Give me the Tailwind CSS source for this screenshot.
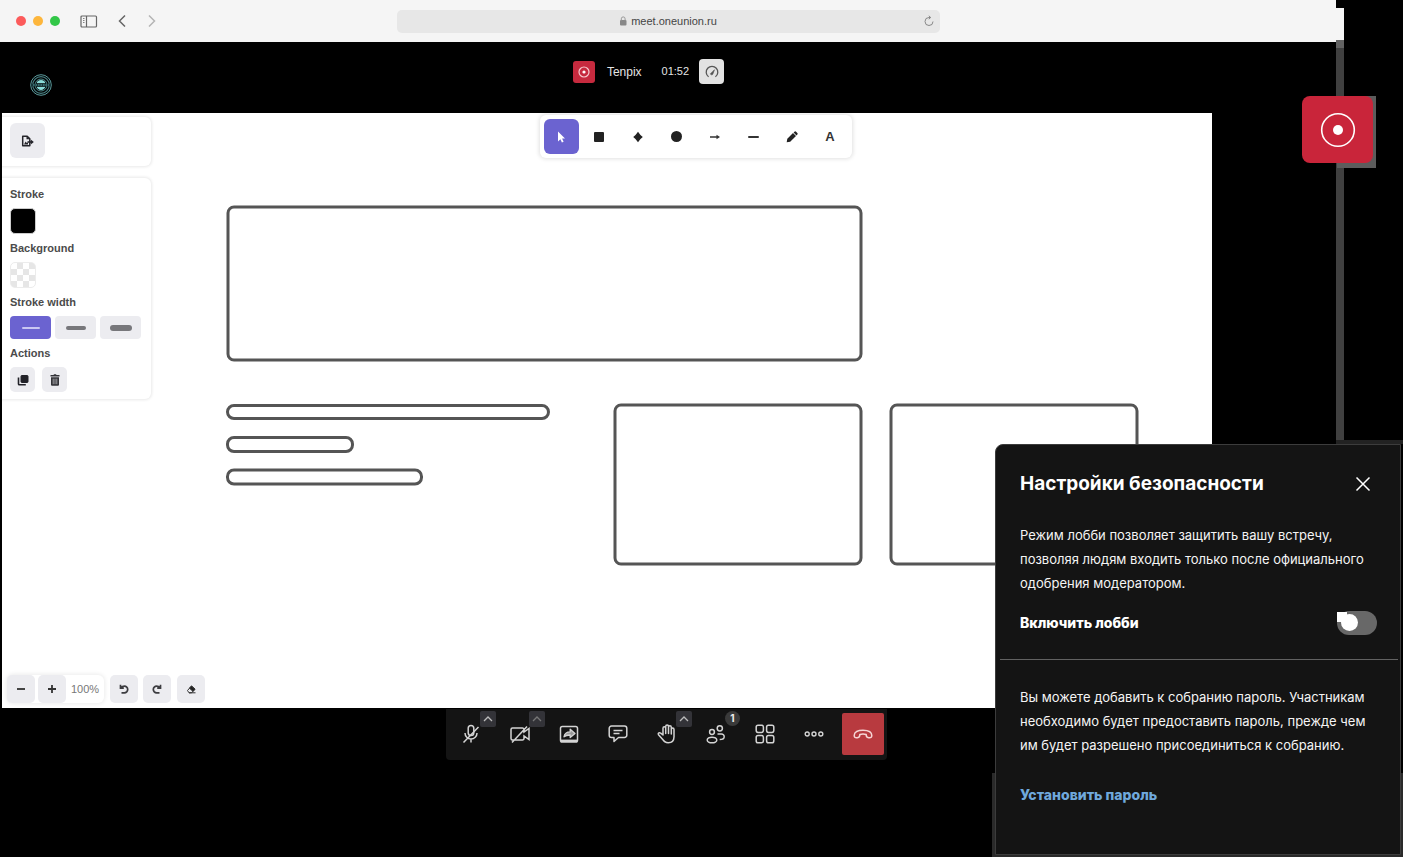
<!DOCTYPE html>
<html lang="ru">
<head>
<meta charset="utf-8">
<title>meet.oneunion.ru</title>
<meta name="viewport" content="width=device-width, initial-scale=1">
<script src="https://cdn.jsdelivr.net/npm/@tailwindcss/browser@4"></script>
</head>
<body class="relative flex min-h-screen overflow-x-hidden bg-black font-['Inter','Liberation_Sans',sans-serif]">

<!-- Browser window -->
<div class="flex min-h-screen flex-1 flex-col">
  <header class="grid h-[42px] grid-cols-[1fr_543px_1fr] items-center bg-[#f5f5f5]">
    <div class="flex items-center pl-4">
      <div class="flex gap-[7px]">
        <span class="size-[10px] rounded-full bg-[#fc5b5b]"></span>
        <span class="size-[10px] rounded-full bg-[#fdb63c]"></span>
        <span class="size-[10px] rounded-full bg-[#32c748]"></span>
      </div>
      <button aria-label="Sidebar" class="ml-5"><svg class="h-[13px] w-[18px]" viewBox="0 0 18 13" fill="none" stroke="#666" stroke-width="1.2"><rect x="1" y="1" width="15.500" height="11" rx="1"/><path d="M6.500 1v11"/><path d="M3 3.500h1.500M3 5.500h1.500M3 7.500h1.500" stroke-width=".8"/></svg></button>
      <button aria-label="Back" class="ml-5"><svg class="h-3 w-2" viewBox="0 0 8 12" fill="none" stroke="#666" stroke-width="1.500"><path d="M7 .5 1.500 6 7 11.500"/></svg></button>
      <button aria-label="Forward" class="ml-[22px]"><svg class="h-3 w-2" viewBox="0 0 8 12" fill="none" stroke="#b5b5b5" stroke-width="1.500"><path d="M1 .5 6.500 6 1 11.500"/></svg></button>
    </div>
    <div class="relative flex h-[23px] items-center justify-center gap-1 rounded-[5px] bg-[#e7e7e7] font-['Liberation_Sans',sans-serif] text-[11px] text-[#454545]">
      <svg class="h-[10px] w-2" viewBox="0 0 8 10"><rect x="1" y="4" width="6.500" height="5.500" rx="1" fill="#888"/><path d="M2.300 4.500V2.800a1.900 1.900 0 0 1 3.800 0v1.700" fill="none" stroke="#999"/></svg>
      <span>meet.oneunion.ru</span>
      <button aria-label="Reload" class="absolute right-[5px]"><svg class="size-3" viewBox="0 0 12 12" fill="none" stroke="#888" stroke-width="1"><path d="M10 6.500A4 4 0 1 1 6 2.500h1.500M5.800.8l1.900 1.700-1.900 1.700"/></svg></button>
    </div>
    <div></div>
  </header>

  <!-- Meeting header -->
  <div class="flex h-[71px] items-start pt-[17px]">
    <div class="flex-1 pt-[14px] pl-[29px]">
      <svg class="size-6" viewBox="0 0 24 24" fill="none" stroke="#5b9a9c"><circle cx="12" cy="12" r="10.300" stroke-width="1"/><circle cx="12" cy="12" r="8.300" stroke="#477f82" stroke-width="1.200"/><circle cx="12" cy="12" r="6" stroke-width="1" stroke="#4d8b8d"/><path d="M7.500 10.200a4.800 4.800 0 0 1 9 0zM7.500 13.800a4.800 4.800 0 0 0 9 0z" fill="#8adcd8" stroke="none"/><path d="M2 12h20" stroke="#173638" stroke-width="2.500"/><path d="M4 12h16" stroke="#5a9c9c" stroke-width="1" stroke-dasharray="1.500 1"/></svg>
    </div>
    <div class="mr-[42px] flex items-center font-['Liberation_Sans',sans-serif] text-[12px] text-[#e4e4e4]">
      <button aria-label="Запись" class="flex size-[22px] items-center justify-center rounded-[3px] bg-[#c62a3e]"><svg class="size-3" viewBox="0 0 12 12"><circle cx="6" cy="6" r="5" fill="none" stroke="#f7c9cf" stroke-width="1.200"/><circle cx="6" cy="6" r="1.600" fill="#fff"/></svg></button>
      <span class="ml-3">Tenpix</span>
      <span class="ml-5 text-[11px]">01:52</span>
      <button aria-label="Качество" class="ml-[10px] flex size-[25px] items-center justify-center rounded-[4px] bg-[#e2e2e2]"><svg class="size-[14px]" viewBox="0 0 14 14" fill="none" stroke="#555" stroke-width="1.300"><path d="M3.600 11.800A5.800 5.800 0 1 1 10.400 11.800"/><path d="M5.400 8.800 9.500 4.700 7.800 9.200a1.300 1.300 0 0 1-2.400-.4z" fill="#555" stroke-width=".6"/></svg></button>
    </div>
    <div class="flex-1 pr-[26px]"></div>
  </div>

  <!-- Whiteboard -->
  <main class="relative mr-[124px] ml-[2px] flex flex-1 flex-col justify-between bg-white">
    <svg class="absolute inset-0 h-full w-full" fill="none" stroke="#555" stroke-width="3">
      <rect x="226" y="94" width="633" height="153" rx="6"/>
      <rect x="225.500" y="292.500" width="321" height="13" rx="6.500"/>
      <rect x="225.500" y="324.500" width="125" height="14" rx="6.500"/>
      <rect x="225.500" y="357" width="194" height="14" rx="6.500"/>
      <rect x="613" y="292" width="246" height="159" rx="6"/>
      <rect x="889" y="292" width="246" height="159" rx="6"/>
    </svg>

    <div class="relative flex items-start">
      <aside class="w-[149px] pt-1 font-['Liberation_Sans',sans-serif] text-[11px] leading-4 font-bold text-[#4b4b4b]">
        <div class="rounded-r-md bg-white py-[6px] pl-2 shadow-[0_0_3px_1px_rgba(0,0,0,0.09)] [clip-path:inset(-4px_-4px_-4px_0)]">
          <button aria-label="Export" class="mb-[2px] flex size-[35px] items-center justify-center rounded-md bg-[#ececf0]"><svg class="h-3 w-[13px]" viewBox="0 0 13 12"><path d="M1.700 1.200h4.500l2.600 2.600v7H1.700z" fill="#ececf0" stroke="#25252b" stroke-width="1.500" stroke-linejoin="round"/><path d="M5.500 1v3.300h3.300z" fill="#25252b"/><path d="m3 9.500 1.600-3 1.200 1.600L7 7.200v2.300z" fill="#25252b"/><path d="M6.500 7h4" stroke="#25252b" stroke-width="1.600"/><path d="m9.800 4.600 3 2.400-3 2.400z" fill="#25252b"/></svg></button>
        </div>
        <div class="mt-3 flex flex-col gap-[6px] rounded-r-md bg-white pt-2 pb-[7px] pl-2 shadow-[0_0_3px_1px_rgba(0,0,0,0.09)] [clip-path:inset(-4px_-4px_-4px_0)]">
          <h3>Stroke</h3>
          <button aria-label="Stroke colour" class="size-[26px] rounded-[5px] border border-[#ccc] bg-black"></button>
          <h3>Background</h3>
          <button aria-label="Background colour" class="size-[26px] rounded-[5px] border border-[#ececec] bg-[repeating-conic-gradient(#e6e6e6_0_25%,#fff_0_50%)] bg-[length:12px_12px]"></button>
          <h3>Stroke width</h3>
          <div class="flex gap-1">
            <button aria-label="Thin" class="flex h-[23px] w-[41px] items-center justify-center rounded-[4px] bg-[#6b63d0]"><span class="h-[2px] w-[18px] rounded-full bg-[#c9c6f2]"></span></button>
            <button aria-label="Bold" class="flex h-[23px] w-[41px] items-center justify-center rounded-[4px] bg-[#ececf0]"><span class="h-1 w-[20px] rounded-full bg-[#77777b]"></span></button>
            <button aria-label="Extra bold" class="flex h-[23px] w-[41px] items-center justify-center rounded-[4px] bg-[#ececf0]"><span class="h-[6px] w-[22px] rounded-full bg-[#77777b]"></span></button>
          </div>
          <h3>Actions</h3>
          <div class="flex gap-[7px]">
            <button aria-label="Duplicate" class="flex size-[25px] items-center justify-center rounded-[5px] bg-[#ececf0]"><svg class="size-3" viewBox="0 0 12 12" fill="none" stroke="#222228"><rect x="4" y="1.500" width="7" height="7" rx=".8" fill="#222228"/><path d="M1.500 3.500v6.400a.8.8 0 0 0 .8.800h6.500" stroke-width="1.600"/></svg></button>
            <button aria-label="Delete" class="flex size-[25px] items-center justify-center rounded-[5px] bg-[#ececf0]"><svg class="size-3" viewBox="0 0 12 12"><path d="M1.500 1h3l.5-.7h2l.5.7h3v1.500h-9zM2 3.200h8v7.600a1 1 0 0 1-1 1H3a1 1 0 0 1-1-1z" fill="#333338"/><path d="M4.200 4.700v5.500M6 4.700v5.500M7.800 4.700v5.500" stroke="#cfcfd3" stroke-width=".7"/></svg></button>
          </div>
        </div>
      </aside>

      <div class="flex flex-1 justify-center pt-[2px] pl-7">
        <nav aria-label="Tools" class="flex w-[312px] items-center justify-between rounded-md bg-white p-1 shadow-[0_0_4px_1px_rgba(0,0,0,0.12)]">
          <button aria-label="Select" class="flex size-[35px] items-center justify-center rounded-md bg-[#6b63d0]"><svg class="size-3" viewBox="0 0 12 12" fill="#fff"><path d="M3 .5v10l2.400-2.200 1.500 3.200 1.700-.8-1.500-3.100H10z"/></svg></button>
          <button aria-label="Rectangle" class="flex size-[35px] items-center justify-center"><span class="size-[10px] rounded-[1px] bg-[#222]"></span></button>
          <button aria-label="Diamond" class="flex size-[35px] items-center justify-center"><svg class="size-3" viewBox="0 0 12 12" fill="#222"><path d="M6 .8Q8 4 10.800 6 8 8 6 11.200 4 8 1.200 6 4 4 6 .8z"/></svg></button>
          <button aria-label="Ellipse" class="flex size-[35px] items-center justify-center"><span class="size-[11px] rounded-full bg-[#222]"></span></button>
          <button aria-label="Arrow" class="flex size-[35px] items-center justify-center"><svg class="size-3" viewBox="0 0 12 12" fill="#333"><path d="M1 5.300h6.500V3.800L11 6 7.500 8.200V6.700H1z"/></svg></button>
          <button aria-label="Line" class="flex size-[35px] items-center justify-center"><span class="h-[2px] w-[11px] rounded-full bg-[#333]"></span></button>
          <button aria-label="Draw" class="flex size-[35px] items-center justify-center"><svg class="size-3" viewBox="0 0 12 12" fill="#222"><path d="M.7 11.300l.6-3.500L7 2l3 3L4.200 10.700zM7.600 1.500l.8-.8a1.200 1.200 0 0 1 1.700 0l1.200 1.200a1.200 1.200 0 0 1 0 1.700l-.8.8z"/></svg></button>
          <button aria-label="Text" class="size-[35px] text-center font-['Liberation_Sans',sans-serif] text-[13px] leading-[35px] font-bold text-[#333]">A</button>
        </nav>
      </div>
    </div>

    <div class="relative flex items-center pb-[5px] pl-[5px] font-['Liberation_Sans',sans-serif] text-[#333]">
      <div class="flex items-center rounded-md bg-white shadow-[0_0_4px_1px_rgba(0,0,0,0.08)]">
        <button aria-label="Zoom out" class="flex size-7 items-center justify-center rounded-[5px] bg-[#ececf0]"><span class="h-[2px] w-2 bg-[#444]"></span></button>
        <button aria-label="Zoom in" class="ml-[3px] flex size-7 items-center justify-center rounded-[5px] bg-[#ececf0]"><svg class="size-2" viewBox="0 0 8 8" stroke="#333" stroke-width="1.800"><path d="M0 4h8M4 0v8"/></svg></button>
        <span class="w-[38px] text-center text-[11px] text-[#777]">100%</span>
      </div>
      <button aria-label="Undo" class="ml-[6px] flex size-7 items-center justify-center rounded-[5px] bg-[#ececf0]"><svg class="size-[10px]" viewBox="0 0 10 10" fill="none" stroke="#3c3c40" stroke-width="1.700"><path d="M1.500.8v3.400h3.300M1.800 3.800C2.900 2.600 4 2.200 5.400 2.200a3.200 3.200 0 0 1 0 6.600H2.500"/></svg></button>
      <button aria-label="Redo" class="ml-[5px] flex size-7 items-center justify-center rounded-[5px] bg-[#ececf0]"><svg class="size-[10px]" viewBox="0 0 10 10" fill="none" stroke="#3c3c40" stroke-width="1.700"><path d="M8.500.8v3.400H5.200M8.200 3.800C7.100 2.600 6 2.200 4.600 2.200a3.200 3.200 0 0 0 0 6.600h2.900"/></svg></button>
      <button aria-label="Eraser" class="ml-[6px] flex size-7 items-center justify-center rounded-[5px] bg-[#ececf0]"><svg class="size-[10px]" viewBox="0 0 10 10" fill="none" stroke="#333" stroke-width="1"><path d="M1.500 6.500 5.500 2l3.500 3.200L5.700 8.800H3z"/><path d="M5.500 2 9 5.200 7 7.400 3.500 4.200z" fill="#222"/><path d="M3 8.800h6.500"/></svg></button>
    </div>
  </main>

  <!-- Call controls -->
  <footer class="flex h-[149px] items-start justify-center pt-px pr-[3px] text-[#d4d4d4]">
    <div class="flex h-[51px] gap-[7px] rounded-b-[4px] bg-[#141414] pt-1 pr-[3px] pl-1">
      <div class="relative">
        <button aria-label="Микрофон" class="flex size-[42px] items-center justify-center"><svg class="size-5" viewBox="0 0 20 20" fill="none" stroke="currentColor" stroke-width="1.500"><rect x="7.200" y="1.500" width="5.600" height="10" rx="2.800"/><path d="M4 9a6 6 0 0 0 12 0M10 15v3.500M2.500 18.500 17.500 3"/></svg></button>
        <button aria-label="Настройки микрофона" class="absolute -top-[2px] -right-1 flex size-4 items-center justify-center rounded-[2px] bg-[#333338]"><svg class="h-[6px] w-[10px]" viewBox="0 0 10 6" fill="none" stroke="#bbb" stroke-width="1.300"><path d="m1 5 4-4 4 4"/></svg></button>
      </div>
      <div class="relative">
        <button aria-label="Камера" class="flex size-[42px] items-center justify-center"><svg class="size-5" viewBox="0 0 20 20" fill="none" stroke="currentColor" stroke-width="1.500"><path d="M14 8V5.500a1.500 1.500 0 0 0-1.500-1.500h-10A1.500 1.500 0 0 0 1 5.500v9A1.500 1.500 0 0 0 2.500 16h10a1.500 1.500 0 0 0 1.500-1.500V12l5 3.500v-11zM2 18.500 17 2.500"/></svg></button>
        <button aria-label="Настройки камеры" class="absolute -top-[2px] -right-1 flex size-4 items-center justify-center rounded-[2px] bg-[#333338]"><svg class="h-[6px] w-[10px]" viewBox="0 0 10 6" fill="none" stroke="#777" stroke-width="1.300"><path d="m1 5 4-4 4 4"/></svg></button>
      </div>
      <button aria-label="Демонстрация экрана" class="flex size-[42px] items-center justify-center"><svg class="size-5" viewBox="0 0 20 20" fill="none" stroke="currentColor" stroke-width="1.500"><rect x="1.500" y="2.500" width="17" height="15.500" rx="1.800"/><path d="M2 16.800h16" stroke-width="2.400"/><path d="M5 12.800c.6-3.500 2.800-5 6.200-5V5.200l4.800 4.300-4.800 4.100V11c-2.800 0-4.400.2-6.200 1.800z" fill="#9a9a9a" stroke-linejoin="round" stroke-width="1.300"/></svg></button>
      <button aria-label="Чат" class="flex size-[42px] items-center justify-center"><svg class="size-5" viewBox="0 0 20 20" fill="none" stroke="currentColor" stroke-width="1.500" stroke-linejoin="round"><path d="M3.500 2h13A2.300 2.300 0 0 1 18.800 4.300v6.900a2.300 2.300 0 0 1-2.300 2.300h-6L6 17.500v-4H3.500a2.300 2.300 0 0 1-2.300-2.300V4.300A2.300 2.300 0 0 1 3.500 2z"/><path d="M5.500 6.500h9M5.500 9.500h6"/></svg></button>
      <div class="relative">
        <button aria-label="Поднять руку" class="flex size-[42px] items-center justify-center"><svg class="size-5" viewBox="0 0 20 20" fill="none" stroke="currentColor" stroke-width="1.500" stroke-linejoin="round" stroke-linecap="round"><path d="M6 11V4.200a1.300 1.300 0 0 1 2.700 0V9.500 2.500a1.400 1.400 0 0 1 2.800 0V9.500 3.200a1.400 1.400 0 0 1 2.800 0V10 5.400a1.300 1.300 0 0 1 2.700 0v7.300c0 3.700-2.100 6-5.800 6-2.700 0-4.400-1.200-5.700-3.500L1.500 10.700c-.8-1.500 1-2.700 2.200-1.500z"/></svg></button>
        <button aria-label="Реакции" class="absolute -top-[2px] -right-1 flex size-4 items-center justify-center rounded-[2px] bg-[#333338]"><svg class="h-[6px] w-[10px]" viewBox="0 0 10 6" fill="none" stroke="#bbb" stroke-width="1.300"><path d="m1 5 4-4 4 4"/></svg></button>
      </div>
      <div class="relative">
        <button aria-label="Участники" class="flex size-[42px] items-center justify-center"><svg class="size-5" viewBox="0 0 20 20" fill="none" stroke="currentColor" stroke-width="1.500"><circle cx="6" cy="8" r="2.400"/><ellipse cx="6" cy="16" rx="4.800" ry="2.800"/><circle cx="13.800" cy="4.300" r="2.600"/><path d="M11.500 10h4a2.700 2.700 0 0 1 2.700 2.700c0 1.800-1.700 2.800-4.500 2.800"/></svg></button>
        <span class="absolute -top-[2px] -right-[3px] size-[15px] rounded-full bg-[#3a3a3a] text-center text-[10px] leading-[15px] font-bold text-[#eee]">1</span>
      </div>
      <button aria-label="Плитка" class="flex size-[42px] items-center justify-center"><svg class="size-5" viewBox="0 0 20 20" fill="none" stroke="currentColor" stroke-width="1.500"><rect x="1.200" y="1.200" width="7.200" height="7.200" rx="1.800"/><rect x="11.600" y="1.200" width="7.200" height="7.200" rx="1.800"/><rect x="1.200" y="11.600" width="7.200" height="7.200" rx="1.800"/><rect x="11.600" y="11.600" width="7.200" height="7.200" rx="1.800"/></svg></button>
      <button aria-label="Ещё" class="flex size-[42px] items-center justify-center"><svg class="size-5" viewBox="0 0 20 20" fill="none" stroke="currentColor" stroke-width="1.400"><circle cx="3.200" cy="10" r="2"/><circle cx="10" cy="10" r="2"/><circle cx="16.800" cy="10" r="2"/></svg></button>
      <button aria-label="Завершить" class="flex size-[42px] items-center justify-center rounded-[2px] bg-[#b83a3f] text-[#f6d5d5]"><svg class="size-5" viewBox="0 0 20 20" fill="none" stroke="currentColor" stroke-width="1.500" stroke-linejoin="round"><path d="M1.200 11.500C1.200 7.800 5 6.200 10 6.200s8.800 1.600 8.800 5.300c0 2-1 2.500-3.200 2.200-1.800-.2-2.600-.8-2.400-3.200-2-.6-4.400-.6-6.400 0 .2 2.400-.6 3-2.400 3.200-2.200.3-3.200-.2-3.200-2.200z"/></svg></button>
    </div>
  </footer>
</div>

<!-- Window edge -->
<div class="flex w-[67px] flex-col items-start pt-2">
  <div class="h-8 w-2 bg-[#f5f5f5]"></div>
  <div class="h-2 w-2 bg-[#636363]"></div>
  <div class="w-2 flex-1 bg-[#404040]"></div>
  <div class="h-[417px] w-full border-t-4 border-[#222]"></div>
</div>

<!-- Floating record button -->
<div class="absolute top-24 right-[27px] h-[72px] w-[39px] bg-[#5c5c5c]"></div>
<button aria-label="Идёт запись" class="absolute top-24 right-[30px] flex h-[67px] w-[71px] items-center justify-center rounded-lg bg-[#c9253a]"><svg class="size-9" viewBox="0 0 36 36"><circle cx="18" cy="18" r="16.300" fill="none" stroke="#fff" stroke-width="1.600"/><circle cx="18" cy="18" r="5" fill="#fff"/></svg></button>

<!-- Security settings -->
<div class="absolute right-0 bottom-0 h-[84px] w-[411px] bg-[#2a2a2a]"></div>
<section aria-labelledby="security-title" class="absolute right-[2px] bottom-[2px] flex h-[411px] w-[406px] flex-col rounded-tl-lg border border-[#3c3c3c] bg-[#141414] text-[13px] leading-6 text-[#f4f4f4]">
  <div class="flex items-center justify-between pt-6 pr-[29px] pl-6">
    <h2 id="security-title" class="text-[19px] leading-[30px] font-bold text-white">Настройки безопасности</h2>
    <button aria-label="Закрыть"><svg class="size-4" viewBox="0 0 16 16" fill="none" stroke="#fff" stroke-width="1.500"><path d="m1.500 1.500 13 13M14.500 1.500l-13 13"/></svg></button>
  </div>
  <p class="mt-6 pl-6 whitespace-nowrap">Режим лобби позволяет защитить вашу встречу,<br>позволяя людям входить только после официального<br>одобрения модератором.</p>
  <div class="mt-4 flex items-center justify-between pr-[23px] pl-6">
    <label for="lobby" class="text-[14px] font-extrabold text-white">Включить лобби</label>
    <span class="relative h-6 w-10">
      <input id="lobby" type="checkbox" role="switch" class="block h-6 w-10 appearance-none rounded-full bg-[#686868]">
      <span class="pointer-events-none absolute top-px left-0 size-[10px] bg-white"></span>
      <span class="pointer-events-none absolute top-[3px] left-1 size-[17px] rounded-full bg-white"></span>
    </span>
  </div>
  <hr class="mt-6 mr-[2px] ml-1 border-[#626262]">
  <p class="mt-[25px] pl-6 whitespace-nowrap">Вы можете добавить к собранию пароль. Участникам<br>необходимо будет предоставить пароль, прежде чем<br>им будет разрешено присоединиться к собранию.</p>
  <a href="#" class="mt-[26px] ml-6 self-start text-[14px] font-extrabold text-[#6fa8dc]">Установить пароль</a>
</section>
</body>
</html>
